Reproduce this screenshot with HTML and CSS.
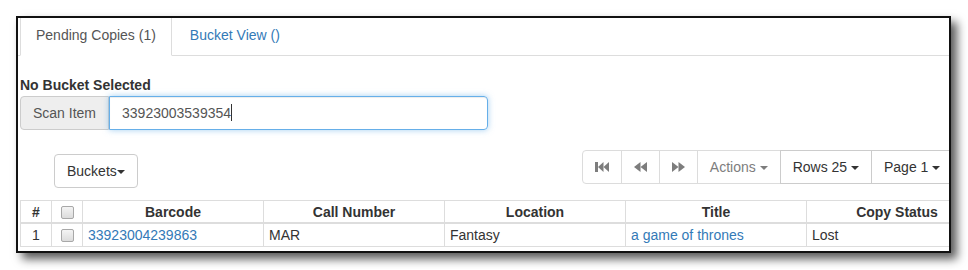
FILE: index.html
```html
<!DOCTYPE html>
<html lang="en">
<head>
    <meta charset="UTF-8">
    <title>Copy Buckets - Pending Copies</title>
    <link rel="stylesheet" href="styles.css">
</head>
<body>

    <div class="shot">
        <ul class="nav-tabs">
            <li class="tab active">Pending Copies (1)</li>
            <li class="tab"><a href="#">Bucket View ()</a></li>
        </ul>

        <div class="pane">
            <div class="bucket-name">No Bucket Selected</div>

            <div class="input-group">
                <span class="addon">Scan Item</span>
                <div class="scan-input">33923003539354<span class="cursor"></span></div>
            </div>

            <div class="toolbar">
                <button class="btn buckets">Buckets<span class="caret"></span></button>

                <div class="btn-group">
                    <button class="btn disabled" title="First page">
                        <svg width="14" height="10" viewBox="0 0 14 10"><rect x="0" y="0" width="3" height="10"/><polygon points="8.5,0 3,5 8.5,10"/><polygon points="14,0 8.5,5 14,10"/></svg>
                    </button>
                    <button class="btn disabled" title="Previous page">
                        <svg width="13" height="10" viewBox="0 0 13 10"><polygon points="6.5,0 0,5 6.5,10"/><polygon points="13,0 6.5,5 13,10"/></svg>
                    </button>
                    <button class="btn disabled" title="Next page">
                        <svg width="13" height="10" viewBox="0 0 13 10"><polygon points="0,0 6.5,5 0,10"/><polygon points="6.5,0 13,5 6.5,10"/></svg>
                    </button>
                    <button class="btn disabled">Actions <span class="caret"></span></button>
                    <button class="btn">Rows 25 <span class="caret"></span></button>
                    <button class="btn">Page 1 <span class="caret"></span></button>
                </div>
            </div>

            <table class="grid">
                <colgroup>
                    <col class="col-num">
                    <col class="col-check">
                    <col span="5" class="col-data">
                </colgroup>
                <thead>
                    <tr>
                        <th>#</th>
                        <th><input type="checkbox" class="check"></th>
                        <th>Barcode</th>
                        <th>Call Number</th>
                        <th>Location</th>
                        <th>Title</th>
                        <th>Copy Status</th>
                    </tr>
                </thead>
                <tbody>
                    <tr>
                        <td class="center">1</td>
                        <td class="center"><input type="checkbox" class="check"></td>
                        <td><a href="#">33923004239863</a></td>
                        <td>MAR</td>
                        <td>Fantasy</td>
                        <td><a href="#">a game of thrones</a></td>
                        <td>Lost</td>
                    </tr>
                </tbody>
            </table>
        </div>
    </div>

</body>
</html>
```

FILE: styles.css
```css
body {
    font-family: "Liberation Sans", Arial, sans-serif;
    font-size: 14px;
    line-height: 20px;
    color: #333;
    background-color: #fff;
    margin: 0;
    padding: 16px;
}
a {
    color: #337ab7;
    text-decoration: none;
}

/* the cropped window */
.shot {
    width: 931px;
    height: 233px;
    border: 2px solid #111;
    background-color: #fff;
    box-shadow: 6px 6px 9px rgba(0, 0, 0, 0.65);
    overflow: hidden;
}

/* tabs */
.nav-tabs {
    display: flex;
    list-style: none;
    margin: 0;
    padding: 0 0 0 2px;
    height: 37px;
    border-bottom: 1px solid #ddd;
}
.tab {
    padding: 7px 15px 10px;
    margin-right: 2px;
    margin-bottom: -1px;
    border: 1px solid transparent;
    border-top: 0;
}
.tab.active {
    color: #555;
    border-color: #ddd;
    border-bottom-color: #fff;
    background-color: #fff;
}

.pane {
    padding-left: 2px;
}
.bucket-name {
    margin-top: 19px;
    font-weight: bold;
}

/* scan input */
.input-group {
    display: flex;
    margin-top: 1px;
    width: 468px;
    height: 34px;
}
.addon {
    padding: 6px 12px;
    color: #555;
    background-color: #eee;
    border: 1px solid #ccc;
    border-radius: 4px 0 0 4px;
}
.scan-input {
    flex: 1;
    padding: 6px 12px;
    color: #555;
    border: 1px solid #66afe9;
    border-radius: 0 4px 4px 0;
    box-shadow: inset 0 1px 1px rgba(0, 0, 0, 0.075), 0 0 6px rgba(102, 175, 233, 0.6);
}
.cursor {
    display: inline-block;
    width: 1px;
    height: 17px;
    background-color: #333;
    vertical-align: -3px;
}

/* toolbar */
.toolbar {
    display: flex;
    align-items: flex-start;
    margin-top: 20px;
    white-space: nowrap;
}
.btn {
    font-family: inherit;
    font-size: 14px;
    line-height: 20px;
    height: 34px;
    padding: 6px 12px;
    color: #333;
    background-color: #fff;
    border: 1px solid #ccc;
    border-radius: 4px;
    cursor: pointer;
}
.buckets {
    margin-top: 4px;
    margin-left: 34px;
    flex-shrink: 0;
}
.btn-group {
    display: flex;
    flex-shrink: 0;
    margin-left: 444px;
}
.btn-group .btn {
    border-radius: 0;
    margin-left: -1px;
}
.btn-group .btn:first-child {
    margin-left: 0;
    border-radius: 4px 0 0 4px;
}
.btn-group .btn.disabled {
    color: #7d7d7d;
    border-color: #dcdcdc;
    cursor: not-allowed;
}
.btn svg {
    display: block;
    fill: #7d7d7d;
}
.caret {
    display: inline-block;
    width: 0;
    height: 0;
    border-top: 4px solid;
    border-left: 4px solid transparent;
    border-right: 4px solid transparent;
    vertical-align: middle;
}

/* grid */
.grid {
    margin-top: 12px;
    table-layout: fixed;
    width: 967px;
    border-collapse: collapse;
    border: 1px solid #ddd;
}
.col-num, .col-check {
    width: 31px;
}
.col-data {
    width: 181px;
}
.grid th, .grid td {
    border: 1px solid #ddd;
    padding: 1px 5px;
    text-align: left;
    white-space: nowrap;
}
.grid th {
    text-align: center;
    padding-bottom: 0;
    border-bottom-width: 2px;
}
.grid td.center {
    text-align: center;
}
.check {
    appearance: none;
    width: 13px;
    height: 13px;
    margin: 0;
    vertical-align: -2px;
    border: 1px solid #a8a8a8;
    border-radius: 2px;
    background: linear-gradient(#f4f4f4, #dcdcdc);
}
```
